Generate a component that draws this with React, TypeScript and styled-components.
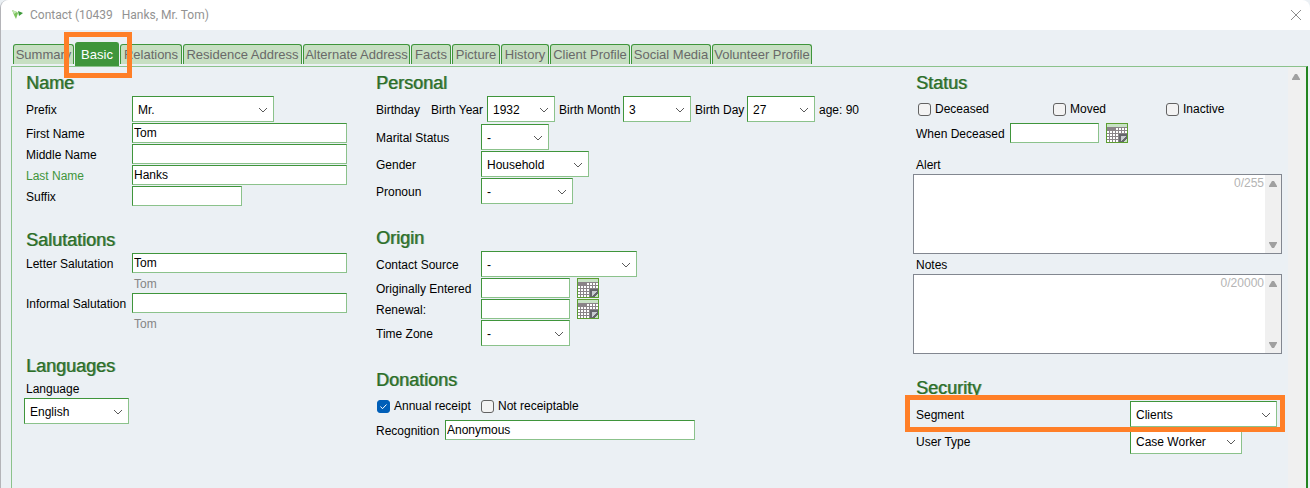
import React from "react";
import styled, { createGlobalStyle } from "styled-components";

const green = "#3f953b";
const greenLight = "#8bc28b";
const heading = "#2b6e28";

const GlobalStyle = createGlobalStyle`
  *, *::before, *::after { box-sizing: border-box; }
  html, body, #root { height: 100%; }
  body {
    margin: 0;
    background: #ebf0f4;
    color: #000;
    font: 12px/20px "Liberation Sans", Arial, sans-serif;
  }
  button, input, select, textarea { font: inherit; color: inherit; margin: 0; border-radius: 0; }
`;

const Window = styled.div`
  display: flex;
  flex-direction: column;
  min-height: 100%;
  border-left: 1px solid #b4b4b8;
  border-top-left-radius: 8px;
  border-top-right-radius: 8px;
  background: #ebf0f4;
`;

const TitleBar = styled.header`
  display: flex;
  align-items: center;
  height: 30px;
  padding: 0 8px 0 10px;
  gap: 6px;
  background: #fff;
  border-top-left-radius: 8px;
  border-top-right-radius: 8px;
  color: #929292;
`;

const Title = styled.h1`
  flex: 1;
  margin: 0;
  font: 400 12px/20px Roboto, "Noto Sans", sans-serif;
  white-space: pre;
`;

const CloseButton = styled.button`
  display: flex;
  padding: 0;
  border: 0;
  background: none;
`;

const Tabs = styled.nav`
  display: flex;
  align-items: flex-end;
  gap: 1px;
  height: 36px;
  padding: 0 12px 2px;
`;

const Tab = styled.button<{ $width: number; $active?: boolean }>`
  position: relative;
  width: ${(p) => p.$width}px;
  height: ${(p) => (p.$active ? 24 : 20)}px;
  margin-bottom: ${(p) => (p.$active ? -2 : 0)}px;
  padding: 0;
  border: 1px solid ${green};
  border-bottom: 0;
  border-radius: 3px 3px 0 0;
  background: ${(p) => (p.$active ? green : "#c7dfc2")};
  color: ${(p) => (p.$active ? "#fff" : "#696969")};
  font-size: 13px;
  line-height: 20px;
  white-space: nowrap;
`;

const TabMarker = styled.span`
  position: absolute;
  z-index: 1;
  inset: -11px -14px -12px -12px;
  border: 5px solid #ff7f27;
`;

const Panel = styled.main`
  flex: 1;
  display: flex;
  margin: 0 2px 0 10px;
  border: solid ${greenLight};
  border-width: 1px 0 0 1px;
  border-right: 2px solid #23841f;
`;

const Columns = styled.div`
  flex: 1;
  display: grid;
  grid-template-columns: minmax(0, 350fr) minmax(0, 540fr) minmax(0, 372fr);
  padding: 6px 0 0 14px;
`;

const Column = styled.div`
  display: flex;
  flex-direction: column;
  gap: 24px;
`;

const Section = styled.section`
  display: flex;
  flex-direction: column;
  gap: 1px;
`;

const Heading = styled.h2`
  margin: 0 0 2px;
  color: ${heading};
  font-size: 18px;
  font-weight: 400;
  line-height: 20px;
  text-shadow: 1px 0 0 rgba(43, 110, 40, 0.6);
`;

const Row = styled.div<{ $label?: number; $end?: number }>`
  display: flex;
  align-items: center;
  position: relative;
  padding-bottom: ${(p) => p.$end ?? 0}px;
  white-space: nowrap;
  & > label:first-child { width: ${(p) => p.$label ?? 106}px; }
`;

const Label = styled.label<{ $width?: number; $inset?: number; $required?: boolean }>`
  flex: none;
  width: ${(p) => (p.$width ? p.$width + "px" : "auto")};
  padding: 2px 0 0 ${(p) => p.$inset ?? 0}px;
  line-height: 18px;
  color: ${(p) => (p.$required ? green : "inherit")};
`;

const Caption = styled.span<{ $width?: number; $inset?: number }>`
  flex: none;
  width: ${(p) => (p.$width ? p.$width + "px" : "auto")};
  padding: 2px 0 0 ${(p) => p.$inset ?? 0}px;
  line-height: 18px;
`;

const TextInput = styled.input<{ $width: number }>`
  width: ${(p) => p.$width}px;
  height: 20px;
  padding: 0 1px;
  border: 1px solid;
  border-color: ${green} ${greenLight} ${greenLight} ${green};
  background: #fff;
  outline: 0;
`;

const Hint = styled.div`
  height: 18px;
  padding-left: 108px;
  color: #858585;
  line-height: 20px;
`;

const SelectBox = styled.span<{ $width: number }>`
  position: relative;
  flex: none;
  width: ${(p) => p.$width}px;
  height: 26px;
  select {
    display: block;
    width: 100%;
    height: 100%;
    padding: 1px 20px 0 5px;
    appearance: none;
    border: 1px solid;
    border-color: ${green} ${greenLight} ${greenLight} ${green};
    background: #fff;
    outline: 0;
  }
  svg {
    position: absolute;
    right: 6px;
    top: 11px;
    pointer-events: none;
  }
`;

const LanguageField = styled.div`
  label { display: block; height: 19px; line-height: 20px; }
  span { display: block; margin-left: -2px; }
`;

const Checks = styled.div<{ $columns: string; $inset?: number }>`
  display: grid;
  grid-template-columns: ${(p) => p.$columns};
  align-items: center;
  height: 26px;
  padding-left: ${(p) => p.$inset ?? 0}px;
`;

const Check = styled.label`
  display: flex;
  align-items: center;
  gap: 4px;
  padding-left: 1px;
  white-space: nowrap;
`;

const CheckBox = styled.span`
  position: relative;
  display: flex;
  input {
    appearance: none;
    width: 13px;
    height: 13px;
    border: 1px solid #626262;
    border-radius: 3px;
    background: #f3f3f3;
  }
  input:checked { border-color: #005fb8; background: #005fb8; }
  svg { position: absolute; inset: 0; pointer-events: none; }
  input:not(:checked) + svg { display: none; }
`;

const DateButton = styled.button`
  display: flex;
  margin-left: 7px;
  padding: 0;
  border: 0;
  background: none;
`;

const Memo = styled.div`
  label { display: block; line-height: 20px; padding-top: 1px; height: 20px; }
`;

const Memos = styled.div`
  margin-top: 10px;
`;

const MemoBox = styled.div`
  position: relative;
  display: flex;
  height: 80px;
  margin: 0 6px 0 -3px;
  border: 1px solid #828790;
  background: #fff;
  textarea {
    flex: 1;
    min-width: 0;
    padding: 1px;
    border: 0;
    outline: 0;
    resize: none;
    background: none;
  }
`;

const Counter = styled.span`
  position: absolute;
  top: -2px;
  right: 17px;
  color: #b4b4b4;
`;

const ScrollTrack = styled.div<{ $width: number; $top?: number; $right?: number }>`
  display: flex;
  flex: none;
  flex-direction: column;
  justify-content: space-between;
  align-items: center;
  width: ${(p) => p.$width}px;
  padding: ${(p) => p.$top ?? 6}px ${(p) => p.$right ?? 0}px 5px 0;
  background: #f0f0f0;
`;

const RowMarker = styled.span`
  position: absolute;
  z-index: 1;
  inset: -6px 3px -5px -11px;
  border: 5px solid #ff7f27;
  pointer-events: none;
`;

const Logo = () => (
  <svg width="13" height="12" viewBox="0 0 13 12" aria-hidden="true">
    <path d="M1 1l5 2 1 1-2 6-2-4z" fill="#7cc45c" />
    <path d="M1 1l5 2-3 2z" fill="#c4e6b4" />
    <path d="M7 2l5 2-4 3z" fill="#3d9a3a" />
  </svg>
);

const ArrowUp = () => (
  <svg width="8" height="6" viewBox="0 0 8 6" aria-hidden="true">
    <path d="M3 0h2l3 5v1H0V5z" fill="#a0a0a0" />
  </svg>
);

const ArrowDown = () => (
  <svg width="8" height="6" viewBox="0 0 8 6" aria-hidden="true">
    <path d="M3 6h2l3-5V0H0v1z" fill="#a0a0a0" />
  </svg>
);

const Calendar = () => (
  <svg width="22" height="20" viewBox="0 0 22 20" shapeRendering="crispEdges" aria-hidden="true">
    <rect width="22" height="20" fill="#5c9e31" />
    <rect x="1" y="1" width="20" height="18" fill="#c8e2c5" />
    <rect x="1" y="4" width="20" height="15" fill="#8a8488" />
    {[5, 8, 11, 14, 17].map((y) =>
      [1, 4, 7, 10, 13, 16, 19].map((x) =>
        y === 5 && x < 10 ? null : <rect key={`${x}-${y}`} x={x} y={y} width="2" height="2" fill="#fff" />
      )
    )}
    <rect x="13" y="11" width="8" height="8" fill="#66666c" />
    <path d="M15 13h5l-5 5z" fill="#c9ccd0" />
    <path d="M21 15v4h-4z" fill="#c8e2c5" />
  </svg>
);

type ChoiceProps = { id: string; width: number; value: string };

const Choice = ({ id, width, value }: ChoiceProps) => (
  <SelectBox $width={width}>
    <select id={id} defaultValue={value}>
      <option>{value}</option>
    </select>
    <svg width="10" height="6" viewBox="0 0 10 6" aria-hidden="true">
      <path d="M1 1l4 4 4-4" fill="none" stroke="#5a5a5a" />
    </svg>
  </SelectBox>
);

const Tick = ({ label, checked }: { label: string; checked?: boolean }) => (
  <Check>
    <CheckBox>
      <input type="checkbox" defaultChecked={checked} />
      <svg width="13" height="13" viewBox="0 0 13 13" aria-hidden="true">
        <path d="M3.5 6.5l2 2.2 4-4.2" fill="none" stroke="#fff" />
      </svg>
    </CheckBox>
    {label}
  </Check>
);

type FieldProps = { id: string; label: string; width: number; value?: string; required?: boolean; labelWidth?: number };

const TextField = ({ id, label, width, value = "", required, labelWidth }: FieldProps) => (
  <Row $label={labelWidth}>
    <Label htmlFor={id} $required={required}>{label}</Label>
    <TextInput id={id} $width={width} defaultValue={value} />
  </Row>
);

const SelectField = ({ id, label, width, value = "-", labelWidth = 105 }: FieldProps) => (
  <Row $label={labelWidth}>
    <Label htmlFor={id}>{label}</Label>
    <Choice id={id} width={width} value={value} />
  </Row>
);

const DateField = ({ id, label, labelWidth = 105 }: { id: string; label: string; labelWidth?: number }) => (
  <Row $label={labelWidth}>
    <Label htmlFor={id}>{label}</Label>
    <TextInput id={id} $width={89} />
    <DateButton type="button" aria-label={`Pick date: ${label}`}><Calendar /></DateButton>
  </Row>
);

const MemoField = ({ id, label, count }: { id: string; label: string; count: string }) => (
  <Memo>
    <label htmlFor={id}>{label}</label>
    <MemoBox>
      <textarea id={id} />
      <Counter>{count}</Counter>
      <ScrollTrack $width={16}><ArrowUp /><ArrowDown /></ScrollTrack>
    </MemoBox>
  </Memo>
);

const tabs: [string, number][] = [
  ["Summary", 61],
  ["Basic", 44],
  ["Relations", 62],
  ["Residence Address", 119],
  ["Alternate Address", 107],
  ["Facts", 40],
  ["Picture", 48],
  ["History", 48],
  ["Client Profile", 80],
  ["Social Media", 80],
  ["Volunteer Profile", 100],
];

export default function App() {
  return (
    <>
      <GlobalStyle />
      <Window>
        <TitleBar>
          <Logo />
          <Title>{"Contact (10439   Hanks, Mr. Tom)"}</Title>
          <CloseButton type="button" aria-label="Close">
            <svg width="12" height="12" viewBox="0 0 12 12" aria-hidden="true">
              <path d="M1 1l10 10M11 1L1 11" fill="none" stroke="#8c8c8c" />
            </svg>
          </CloseButton>
        </TitleBar>
        <Tabs>
          {tabs.map(([name, width]) => (
            <Tab key={name} type="button" $width={width} $active={name === "Basic"}>
              {name}
              {name === "Basic" && <TabMarker />}
            </Tab>
          ))}
        </Tabs>
        <Panel>
          <Columns>
            <Column>
              <Section>
                <Heading>Name</Heading>
                <SelectField id="prefix" label="Prefix" width={142} value="Mr." labelWidth={106} />
                <TextField id="first" label="First Name" width={215} value="Tom" />
                <TextField id="middle" label="Middle Name" width={215} />
                <TextField id="last" label="Last Name" width={215} value="Hanks" required />
                <TextField id="suffix" label="Suffix" width={110} />
              </Section>
              <Section>
                <Heading>Salutations</Heading>
                <TextField id="letter" label="Letter Salutation" width={215} value="Tom" />
                <Hint>Tom</Hint>
                <TextField id="informal" label="Informal Salutation" width={215} />
                <Hint>Tom</Hint>
              </Section>
              <Section>
                <Heading>Languages</Heading>
                <LanguageField>
                  <label htmlFor="language">Language</label>
                  <Choice id="language" width={105} value="English" />
                </LanguageField>
              </Section>
            </Column>
            <Column>
              <Section>
                <Heading>Personal</Heading>
                <Row $end={1}>
                  <Caption $width={55}>Birthday</Caption>
                  <Label htmlFor="year" $width={56}>Birth Year</Label>
                  <Choice id="year" width={68} value="1932" />
                  <Label htmlFor="month" $width={68} $inset={4}>Birth Month</Label>
                  <Choice id="month" width={68} value="3" />
                  <Label htmlFor="day" $width={56} $inset={4}>Birth Day</Label>
                  <Choice id="day" width={68} value="27" />
                  <Caption $inset={4}>age: 90</Caption>
                </Row>
                <SelectField id="marital" label="Marital Status" width={68} />
                <SelectField id="gender" label="Gender" width={108} value="Household" />
                <SelectField id="pronoun" label="Pronoun" width={92} />
              </Section>
              <Section>
                <Heading>Origin</Heading>
                <SelectField id="source" label="Contact Source" width={156} />
                <DateField id="entered" label="Originally Entered" />
                <DateField id="renewal" label="Renewal:" />
                <SelectField id="zone" label="Time Zone" width={89} />
              </Section>
              <Section>
                <Heading>Donations</Heading>
                <Checks $columns="104px 1fr">
                  <Tick label="Annual receipt" checked />
                  <Tick label="Not receiptable" />
                </Checks>
                <TextField id="recognition" label="Recognition" width={250} value="Anonymous" labelWidth={69} />
              </Section>
            </Column>
            <Column>
              <Section>
                <Heading>Status</Heading>
                <Checks $columns="135px 113px 1fr" $inset={1}>
                  <Tick label="Deceased" />
                  <Tick label="Moved" />
                  <Tick label="Inactive" />
                </Checks>
                <DateField id="deceased" label="When Deceased" labelWidth={94} />
                <Memos>
                  <MemoField id="alert" label="Alert" count="0/255" />
                  <MemoField id="notes" label="Notes" count="0/20000" />
                </Memos>
              </Section>
              <Section>
                <Heading>Security</Heading>
                <Row $label={214}>
                  <Label htmlFor="segment">Segment</Label>
                  <Choice id="segment" width={147} value="Clients" />
                  <RowMarker />
                </Row>
                <SelectField id="usertype" label="User Type" width={112} value="Case Worker" labelWidth={214} />
              </Section>
            </Column>
          </Columns>
          <ScrollTrack $width={18} $top={7} $right={2}><ArrowUp /></ScrollTrack>
        </Panel>
      </Window>
    </>
  );
}
